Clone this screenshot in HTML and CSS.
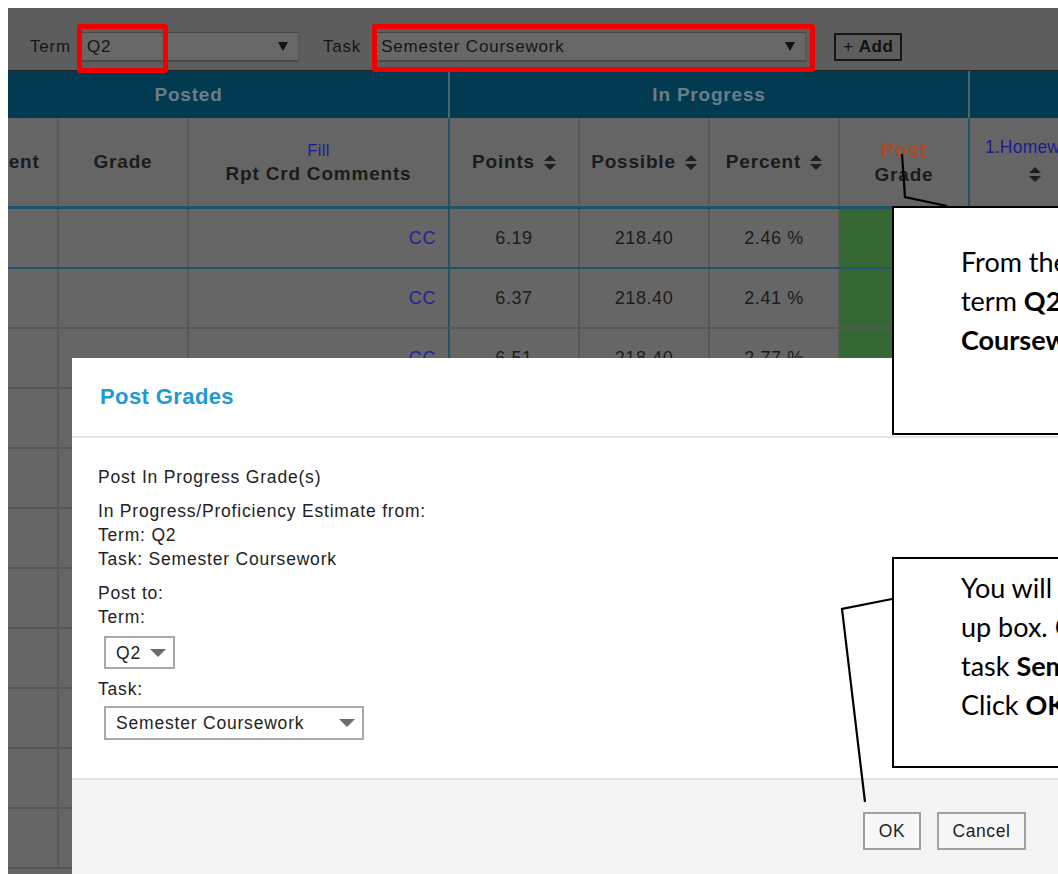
FILE: index.html
```html
<!DOCTYPE html>
<html lang="en">
<head>
<meta charset="utf-8">
<title>Grade Book – Post Grades</title>
<link rel="stylesheet" href="styles.css">
</head>
<body>
<div class="screen">

  <!-- term / task pickers -->
  <div class="toolbar">
    <span class="tb-label">Term</span>
    <div class="tb-select tb-term"><span>Q2</span><svg class="tb-arrow" viewBox="0 0 10 9"><path d="M0 0H10L5 9Z"/></svg></div>
    <span class="tb-label">Task</span>
    <div class="tb-select tb-task"><span>Semester Coursework</span><svg class="tb-arrow" viewBox="0 0 10 9"><path d="M0 0H10L5 9Z"/></svg></div>
    <button class="add-btn" type="button">+ <b>Add</b></button>
  </div>

  <!-- grade grid, scrolled horizontally -->
  <div class="grid-clip">
    <div class="grid">
      <div class="row band">
        <div class="band-cell posted">Posted</div>
        <div class="band-cell progress">In Progress</div>
        <div class="band-cell"></div>
      </div>

      <div class="row heads">
        <div class="hc">Comment</div>
        <div class="hc">Grade</div>
        <div class="hc sep"><span class="link">Fill</span><span>Rpt Crd Comments</span></div>
        <div class="hc"><span class="sortable">Points<svg class="sort" viewBox="0 0 12 15"><path d="M0 6L6 0L12 6Z M0 9H12L6 15Z"/></svg></span></div>
        <div class="hc"><span class="sortable">Possible<svg class="sort" viewBox="0 0 12 15"><path d="M0 6L6 0L12 6Z M0 9H12L6 15Z"/></svg></span></div>
        <div class="hc"><span class="sortable">Percent<svg class="sort" viewBox="0 0 12 15"><path d="M0 6L6 0L12 6Z M0 9H12L6 15Z"/></svg></span></div>
        <div class="hc sep"><span class="post">Post</span><span>Grade</span></div>
        <div class="hc hw"><span class="link">1.Homework</span><svg class="sort" viewBox="0 0 12 15"><path d="M0 6L6 0L12 6Z M0 9H12L6 15Z"/></svg></div>
      </div>

      <div class="row data first">
        <div class="cell"></div><div class="cell"></div><div class="cell sep cc">CC</div>
        <div class="cell">6.19</div><div class="cell">218.40</div><div class="cell">2.46 %</div>
        <div class="cell sep posting"></div><div class="cell"></div>
      </div>
      <div class="row data">
        <div class="cell"></div><div class="cell"></div><div class="cell sep cc">CC</div>
        <div class="cell">6.37</div><div class="cell">218.40</div><div class="cell">2.41 %</div>
        <div class="cell sep posting"></div><div class="cell"></div>
      </div>
      <div class="row data">
        <div class="cell"></div><div class="cell"></div><div class="cell sep cc">CC</div>
        <div class="cell">6.51</div><div class="cell">218.40</div><div class="cell">2.77 %</div>
        <div class="cell sep posting"></div><div class="cell"></div>
      </div>
      <div class="row data">
        <div class="cell"></div><div class="cell"></div><div class="cell sep cc">CC</div>
        <div class="cell">7.02</div><div class="cell">218.40</div><div class="cell">3.21 %</div>
        <div class="cell sep posting"></div><div class="cell"></div>
      </div>
      <div class="row data">
        <div class="cell"></div><div class="cell"></div><div class="cell sep cc">CC</div>
        <div class="cell">5.88</div><div class="cell">218.40</div><div class="cell">2.69 %</div>
        <div class="cell sep posting"></div><div class="cell"></div>
      </div>
      <div class="row data">
        <div class="cell"></div><div class="cell"></div><div class="cell sep cc">CC</div>
        <div class="cell">6.44</div><div class="cell">218.40</div><div class="cell">2.95 %</div>
        <div class="cell sep posting"></div><div class="cell"></div>
      </div>
      <div class="row data">
        <div class="cell"></div><div class="cell"></div><div class="cell sep cc">CC</div>
        <div class="cell">6.90</div><div class="cell">218.40</div><div class="cell">3.16 %</div>
        <div class="cell sep posting"></div><div class="cell"></div>
      </div>
      <div class="row data">
        <div class="cell"></div><div class="cell"></div><div class="cell sep cc">CC</div>
        <div class="cell">6.12</div><div class="cell">218.40</div><div class="cell">2.80 %</div>
        <div class="cell sep posting"></div><div class="cell"></div>
      </div>
      <div class="row data">
        <div class="cell"></div><div class="cell"></div><div class="cell sep cc">CC</div>
        <div class="cell">6.73</div><div class="cell">218.40</div><div class="cell">3.08 %</div>
        <div class="cell sep posting"></div><div class="cell"></div>
      </div>
      <div class="row data">
        <div class="cell"></div><div class="cell"></div><div class="cell sep cc">CC</div>
        <div class="cell">6.25</div><div class="cell">218.40</div><div class="cell">2.86 %</div>
        <div class="cell sep posting"></div><div class="cell"></div>
      </div>
      <div class="row data">
        <div class="cell"></div><div class="cell"></div><div class="cell sep cc">CC</div>
        <div class="cell">6.58</div><div class="cell">218.40</div><div class="cell">3.01 %</div>
        <div class="cell sep posting"></div><div class="cell"></div>
      </div>
    </div>
  </div>

  <!-- red marks around the selected term and task -->
  <div class="mark mark-term"></div>
  <div class="mark mark-task"></div>

  <!-- Post Grades dialog -->
  <div class="modal" role="dialog" aria-labelledby="post-title">
    <div class="modal-head"><h2 id="post-title">Post Grades</h2></div>
    <div class="modal-body">
      <p>Post In Progress Grade(s)</p>
      <p>In Progress/Proficiency Estimate from:<br>Term: Q2<br>Task: Semester Coursework</p>
      <p class="before-dd">Post to:<br>Term:</p>
      <div class="dd dd-term"><span>Q2</span><i class="dd-arrow"></i></div>
      <p class="before-dd2">Task:</p>
      <div class="dd dd-task"><span>Semester Coursework</span><i class="dd-arrow"></i></div>
    </div>
    <div class="modal-foot">
      <button class="btn btn-ok" type="button">OK</button>
      <button class="btn btn-cancel" type="button">Cancel</button>
    </div>
  </div>

  <!-- callout pointers -->
  <svg class="leaders" viewBox="0 0 1050 866" width="1050" height="866">
    <polyline points="939,198 897,189 894,146"/>
    <polyline points="884,591 834,601 857,794"/>
  </svg>

  <div class="callout c1">From the grade book, choose the<br>term <b>Q2</b> and the task <b>Semester</b><br><b>Coursework</b>, then click <b>Post</b>.</div>
  <div class="callout c2">You will see a pop<br>up box. Check the term <b>Q2</b> and<br>task <b>Semester Coursework</b>.<br>Click <b>OK</b>.</div>

</div>
</body>
</html>
```

FILE: styles.css
```css
* { box-sizing: border-box; }

html { overflow: hidden; }

body {
  margin: 8px 0 0 8px;
  background: #fff;
  font-family: "Liberation Sans", Arial, sans-serif;
  color: #1c1c1c;
}

.screen {
  position: relative;
  width: 1050px;
  height: 866px;
  overflow: hidden;
  background: #666;
}

/* ---------- toolbar ---------- */
.toolbar {
  display: flex;
  align-items: flex-start;
  height: 63px;
  padding: 24px 0 0 22px;
  background: #5d5d5d;
  border-bottom: 1px solid #222;
}

.tb-label {
  font-size: 17px;
  letter-spacing: .8px;
  line-height: 30px;
  color: #161616;
  margin-right: 7px;
}

.tb-select {
  display: flex;
  align-items: center;
  justify-content: space-between;
  height: 30px;
  padding: 0 10px 0 8px;
  background: #676767;
  border: 1px solid #545454;
  border-top-color: #474747;
  border-bottom: 2px solid #4a4a4a;
  font-size: 17px;
  letter-spacing: .8px;
  color: #161616;
}

.tb-term { width: 221px; margin-right: 24px; }
.tb-task { width: 434px; margin: 0 28px 0 4px; }

.tb-arrow { width: 10px; height: 9px; fill: #111; }

.add-btn {
  height: 28px;
  margin-top: 1px;
  padding: 0 7px;
  border: 2px solid #151515;
  background: #5d5d5d;
  font: 17px "Liberation Sans", Arial, sans-serif;
  letter-spacing: .5px;
  color: #111;
}

/* ---------- grid ---------- */
.grid-clip { overflow: hidden; }

.grid { margin-left: -79px; width: 1200px; }

.row {
  display: grid;
  grid-template-columns: 130px 130px 261px 130px 130px 130px 130px 132px;
}

.band { height: 47px; background: #023a52; }

.band-cell {
  display: flex;
  align-items: center;
  justify-content: center;
  font-weight: bold;
  font-size: 19px;
  letter-spacing: .8px;
  color: #6b7e86;
  border-right: 2px solid #4d6570;
}

.band .posted { grid-column: span 3; }
.band .progress { grid-column: span 4; }

.heads {
  height: 91px;
  background: #656565;
  border-bottom: 3px solid #1e5468;
}

.hc {
  display: flex;
  flex-direction: column;
  align-items: center;
  justify-content: center;
  border-right: 2px solid #585858;
  font-weight: bold;
  font-size: 19px;
  letter-spacing: .8px;
  line-height: 24px;
  color: #1b1b1b;
  text-align: center;
}

.hc .link {
  font-weight: normal;
  font-size: 16.5px;
  letter-spacing: .4px;
  color: #1c1c92;
}

.hc .post {
  font-size: 20px;
  line-height: 25px;
  color: #ab4b26;
}

.hc.hw { justify-content: flex-start; padding-top: 17px; }
.hc.hw .link { font-size: 17.5px; letter-spacing: .2px; }
.hc.hw .sort { margin: 8px 0 0; }

.sortable { display: inline-flex; align-items: center; gap: 9px; }

.sort { width: 12px; height: 15px; fill: #1f1f1f; }

.hc.sep, .cell.sep { border-right-color: #1d566b; }

.data {
  height: 60px;
  background: #666;
  border-bottom: 2px solid #575757;
}

.data.first { border-bottom-color: #1d566b; }

.cell {
  display: flex;
  align-items: center;
  justify-content: center;
  border-right: 2px solid #585858;
  font-size: 18px;
  letter-spacing: .6px;
  color: #1c1c1c;
}

.cell.cc {
  justify-content: flex-end;
  padding-right: 12px;
  color: #23239a;
}

.cell.posting { background: #356834; }

/* ---------- red marks ---------- */
.mark {
  position: absolute;
  top: 16px;
  border: 5px solid #f20000;
  border-radius: 3px;
}

.mark-term { left: 69px; width: 91px; height: 49px; }
.mark-task { left: 364px; width: 443px; height: 48px; }

/* ---------- dialog ---------- */
.modal {
  position: absolute;
  left: 64px;
  top: 350px;
  width: 1030px;
  height: 560px;
  background: #fff;
}

.modal-head {
  display: flex;
  align-items: center;
  height: 80px;
  padding-left: 28px;
  border-bottom: 2px solid #e6e6e6;
}

.modal-head h2 {
  margin: 0;
  font-size: 22px;
  letter-spacing: .4px;
  font-weight: bold;
  color: #1b9ad6;
}

.modal-body {
  height: 340px;
  padding: 27px 0 0 26px;
  font-size: 17.5px;
  letter-spacing: .8px;
  line-height: 24px;
  color: #222;
}

.modal-body p { margin: 0 0 10px; }
.modal-body .before-dd { margin-bottom: 7px; }
.modal-body .before-dd2 { margin: 8px 0 5px; }

.dd {
  display: flex;
  align-items: center;
  justify-content: space-between;
  height: 33px;
  margin-left: 6px;
  padding: 0 7px 0 10px;
  border: 2px solid #a8a8a8;
  background: #fff;
}

.dd-term { width: 71px; }
.dd-task { width: 260px; height: 34px; }

.dd-arrow {
  width: 0;
  height: 0;
  border-left: 8px solid transparent;
  border-right: 8px solid transparent;
  border-top: 8px solid #6b6b6b;
}

.modal-foot {
  display: flex;
  justify-content: flex-end;
  gap: 16px;
  height: 140px;
  padding: 32px 76px 0 0;
  background: #f4f4f4;
  border-top: 2px solid #e2e2e2;
}

.btn {
  height: 38px;
  padding: 0;
  border: 2px solid #a0a0a0;
  background: #f7f7f7;
  font: 17.5px "Liberation Sans", Arial, sans-serif;
  letter-spacing: .6px;
  color: #222;
}

.btn-ok { width: 58px; }
.btn-cancel { width: 89px; }

/* ---------- callouts ---------- */
.leaders {
  position: absolute;
  left: 0;
  top: 0;
  pointer-events: none;
}

.leaders polyline {
  fill: none;
  stroke: #000;
  stroke-width: 2.2;
}

.callout {
  position: absolute;
  left: 884px;
  width: 560px;
  padding-left: 67px;
  background: #fff;
  border: 2.5px solid #000;
  font-family: Lato, "Liberation Sans", sans-serif;
  font-size: 27px;
  line-height: 39px;
  color: #000;
  white-space: nowrap;
}

.c1 { top: 198px; height: 229px; padding-top: 34px; }
.c2 { top: 549px; height: 211px; padding-top: 9px; }
```
